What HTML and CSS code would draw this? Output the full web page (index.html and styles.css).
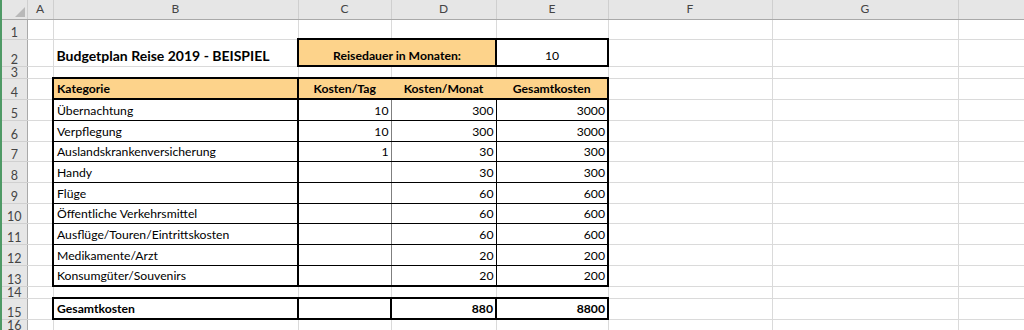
FILE: index.html
```html
<!DOCTYPE html>
<html lang="de">
<head>
<meta charset="utf-8">
<title>Budgetplan Reise 2019</title>
<link rel="stylesheet" href="styles.css">
</head>
<body>
<table class="sheet">
  <colgroup>
    <col class="c-rh"><col class="c-a"><col class="c-b"><col class="c-c"><col class="c-d"><col class="c-e"><col class="c-f"><col class="c-g"><col class="c-h">
  </colgroup>
  <thead>
    <tr class="h-hdr">
      <th class="corner"><div class="corner-in"><svg width="10" height="10" viewBox="0 0 10 10"><polygon points="10,0 10,10 0,10" fill="#b9b9b9"/></svg></div></th>
      <th class="colh">A</th><th class="colh">B</th><th class="colh">C</th><th class="colh">D</th><th class="colh">E</th><th class="colh">F</th><th class="colh">G</th><th class="colh"></th>
    </tr>
  </thead>
  <tbody>
    <tr class="h-20"><th class="rowh">1</th><td></td><td></td><td></td><td></td><td></td><td></td><td></td><td></td></tr>
    <tr class="h-27"><th class="rowh">2</th><td></td><td class="title">Budgetplan Reise 2019 - BEISPIEL</td><td class="box orange bold center" colspan="2">Reisedauer in Monaten:</td><td class="box center">10</td><td></td><td></td><td></td></tr>
    <tr class="h-12"><th class="rowh">3</th><td></td><td></td><td></td><td></td><td></td><td></td><td></td><td></td></tr>
    <tr class="h-21"><th class="rowh">4</th><td></td><td class="box orange bold">Kategorie</td><td class="hd hd-c orange bold center">Kosten/Tag</td><td class="hd hd-d orange bold center">Kosten/Monat</td><td class="hd hd-e orange bold center">Gesamtkosten</td><td></td><td></td><td></td></tr>
    <tr class="h-21"><th class="rowh">5</th><td></td><td class="kb">Übernachtung</td><td class="kc num">10</td><td class="kd num">300</td><td class="ke num">3000</td><td></td><td></td><td></td></tr>
    <tr class="h-21"><th class="rowh">6</th><td></td><td class="kb">Verpflegung</td><td class="kc num">10</td><td class="kd num">300</td><td class="ke num">3000</td><td></td><td></td><td></td></tr>
    <tr class="h-20"><th class="rowh">7</th><td></td><td class="kb">Auslandskrankenversicherung</td><td class="kc num">1</td><td class="kd num">30</td><td class="ke num">300</td><td></td><td></td><td></td></tr>
    <tr class="h-21"><th class="rowh">8</th><td></td><td class="kb">Handy</td><td class="kc num"></td><td class="kd num">30</td><td class="ke num">300</td><td></td><td></td><td></td></tr>
    <tr class="h-21"><th class="rowh">9</th><td></td><td class="kb">Flüge</td><td class="kc num"></td><td class="kd num">60</td><td class="ke num">600</td><td></td><td></td><td></td></tr>
    <tr class="h-20"><th class="rowh">10</th><td></td><td class="kb">Öffentliche Verkehrsmittel</td><td class="kc num"></td><td class="kd num">60</td><td class="ke num">600</td><td></td><td></td><td></td></tr>
    <tr class="h-21"><th class="rowh">11</th><td></td><td class="kb">Ausflüge/Touren/Eintrittskosten</td><td class="kc num"></td><td class="kd num">60</td><td class="ke num">600</td><td></td><td></td><td></td></tr>
    <tr class="h-21"><th class="rowh">12</th><td></td><td class="kb">Medikamente/Arzt</td><td class="kc num"></td><td class="kd num">20</td><td class="ke num">200</td><td></td><td></td><td></td></tr>
    <tr class="h-21"><th class="rowh">13</th><td></td><td class="kb last">Konsumgüter/Souvenirs</td><td class="kc num last"></td><td class="kd num last">20</td><td class="ke num last">200</td><td></td><td></td><td></td></tr>
    <tr class="h-12"><th class="rowh">14</th><td></td><td></td><td></td><td></td><td></td><td></td><td></td><td></td></tr>
    <tr class="h-21"><th class="rowh">15</th><td></td><td class="box bold">Gesamtkosten</td><td class="box"></td><td class="box bold num">880</td><td class="box bold num">8800</td><td></td><td></td><td></td></tr>
    <tr class="h-12 r-last"><th class="rowh">16</th><td></td><td></td><td></td><td></td><td></td><td></td><td></td><td></td></tr>
  </tbody>
</table>
</body>
</html>
```
FILE: styles.css
```css
html, body {
  margin: 0;
  padding: 0;
  background: #ffffff;
  overflow: hidden;
}
body {
  border-left: 2px solid #4f9a66;
  font-family: Lato, "Liberation Sans", Arial, sans-serif;
  font-size: 12.2px;
  color: #000;
}
.sheet {
  border-collapse: collapse;
  table-layout: fixed;
  width: 1060px;
}
.c-rh { width: 25px; }
.c-a { width: 26px; }
.c-b { width: 245px; }
.c-c { width: 93px; }
.c-d { width: 105px; }
.c-e { width: 112px; }
.c-f { width: 164px; }
.c-g { width: 186px; }
.c-h { width: 104px; }

.h-hdr { height: 19px; }
.h-12 { height: 12px; }
.h-20 { height: 20px; }
.h-21 { height: 21px; }
.h-27 { height: 27px; }

td, th {
  padding: 0 3px 2px 3px;
  vertical-align: bottom;
  line-height: 14px;
  white-space: nowrap;
  overflow: hidden;
  font-weight: normal;
  text-align: left;
}
td {
  border: 1px solid #dadada;
}
.colh {
  background: #e6e6e6;
  color: #444;
  text-align: center;
  vertical-align: middle;
  font-size: 12px;
  border-right: 1px solid #cfcfcf;
  border-bottom: 1px solid #a9a9a9;
  padding: 0;
}
.corner {
  background: #e6e6e6;
  border-right: 1px solid #cfcfcf;
  border-bottom: 1px solid #a9a9a9;
  padding: 0 2px 2px 0;
  vertical-align: bottom;
}
.corner-in {
  display: flex;
  justify-content: flex-end;
  align-items: flex-end;
}
.corner-in svg { display: block; }
.rowh {
  background: #e6e6e6;
  color: #444;
  text-align: center;
  font-size: 12.5px;
  border-right: 1px solid #a9a9a9;
  border-bottom: 1px solid #d0d0d0;
  padding: 0;
  line-height: 13px;
}
.h-12 .rowh { line-height: 11px; }
.r-last .rowh { vertical-align: top; padding-top: 0; }

.title {
  font-weight: bold;
  font-size: 14px;
  padding-bottom: 3px;
}
.bold { font-weight: bold; }
.center { text-align: center; }
.num { text-align: right; padding-right: 2px; }
.orange { background: #fdd38b; }
.box { border: 2px solid #000; }

.hd { border-top: 2px solid #000; border-bottom: 2px solid #000; }
.hd-c { border-right: 1px solid #fdd38b; }
.hd-d { border-left: 1px solid #fdd38b; border-right: 1px solid #fdd38b; }
.hd-e { border-left: 1px solid #fdd38b; border-right: 2px solid #000; }

.kb { border-left: 2px solid #000; border-right: 2px solid #000; border-bottom: 1px solid #000; }
.kc { border-right: 1px solid #7f7f7f; border-bottom: 1px solid #000; }
.kd { border-right: 1px solid #000; border-bottom: 1px solid #000; }
.ke { border-right: 2px solid #000; border-bottom: 1px solid #000; }
.last { border-bottom: 2px solid #000; }
```
